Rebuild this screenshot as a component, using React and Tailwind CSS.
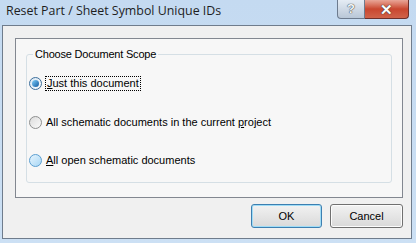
export default function App() {
  const radio = () => (
    <span className="relative inline-block w-[13px] h-[13px] rounded-full border border-[#8e8f8f] bg-gradient-to-br from-[#dcdcdc] to-[#fafafa]" />
  );
  return (
    <div className="w-[416px] h-[243px] bg-gradient-to-b from-[#c4daf1] to-[#cce0f4] flex flex-col overflow-hidden" style={{ fontFamily: '"Liberation Sans", Arial, sans-serif' }}>
      <div className="h-[25px] flex items-start justify-between">
        <div className="pl-[6px] pt-[2px] text-[12.4px] text-[#1e1e1e]" style={{ fontFamily: '"Open Sans", "Noto Sans", sans-serif' }}>Reset Part / Sheet Symbol Unique IDs</div>
        <div className="flex mr-[7px]">
          <div className="w-[28px] h-[19px] rounded-bl-[4px] border border-[#6d7b8e] border-t-0 bg-gradient-to-b from-[#e5ecf4] to-[#b9c7d7] flex items-center justify-center text-[13px] font-bold text-[#f4f8fc]" style={{ textShadow: '0 0 1px #333, 0 0 1px #333' }}>?</div>
          <div className="w-[44px] h-[19px] rounded-br-[4px] border border-[#6d2f2a] border-t-0 border-l-0 bg-gradient-to-b from-[#e8a597] via-[#c9462f] to-[#d0634a] flex items-center justify-center text-[15px] font-bold text-white leading-none" style={{ textShadow: '0 0 1px #333, 0 0 1px #333' }}>✕</div>
        </div>
      </div>
      <div className="ml-[2px] mr-[4px] h-[214px] border border-[#6f7c8c] bg-[#f0f0f0] flex flex-col">
        <div className="ml-[12px] mr-[8px] mt-[12px] h-[160px] border border-[#828790] bg-[#f7f7f7] px-[10px] pt-[15px]">
          <div className="relative h-[129px] border border-[#d5dfe5] rounded-[3px]">
            <div className="absolute left-[6px] -top-[8px] px-[2px] bg-[#f7f7f7] text-[11px] text-black leading-[14px] tracking-[-0.2px]">Choose Document Scope</div>
            <div className="flex flex-col pt-[21px] pl-[2px] gap-[25px] text-[11px] text-black leading-[13px]">
              <div className="flex items-center gap-[3px]">
                <span className="relative inline-block w-[13px] h-[13px] rounded-full border border-[#3d6f9c] bg-gradient-to-br from-[#d7e7f4] to-[#fafafa]">
                  <span className="absolute left-[2px] top-[2px] w-[7px] h-[7px] rounded-full bg-gradient-to-br from-[#7fd0fa] to-[#0c5ba0]" />
                </span>
                <span className="border border-dotted border-black px-[1px]"><u>J</u>ust this document</span>
              </div>
              <div className="flex items-center gap-[4px]">
                {radio()}
                <span>All schematic documents in the current <u>p</u>roject</span>
              </div>
              <div className="flex items-center gap-[4px]">
                <span className="inline-block w-[13px] h-[13px] rounded-full border border-[#5a9ed1] bg-gradient-to-br from-[#e6f4fd] to-[#a8d7f5]" />
                <span><u>A</u>ll open schematic documents</span>
              </div>
            </div>
          </div>
        </div>
        <div className="flex justify-end gap-[8px] mr-[8px] mt-[6px]">
          <button className="w-[71px] h-[24px] rounded-[3px] border border-[#3c7fb1] bg-gradient-to-b from-[#f2f2f2] to-[#d9d9d9] text-[11px] text-black shadow-[inset_0_0_0_1px_#9fdcf6]">OK</button>
          <button className="w-[73px] h-[24px] rounded-[3px] border border-[#707070] bg-gradient-to-b from-[#f2f2f2] to-[#d9d9d9] text-[11px] text-black shadow-[inset_0_0_0_1px_#fcfcfc]">Cancel</button>
        </div>
      </div>
    </div>
  );
}
